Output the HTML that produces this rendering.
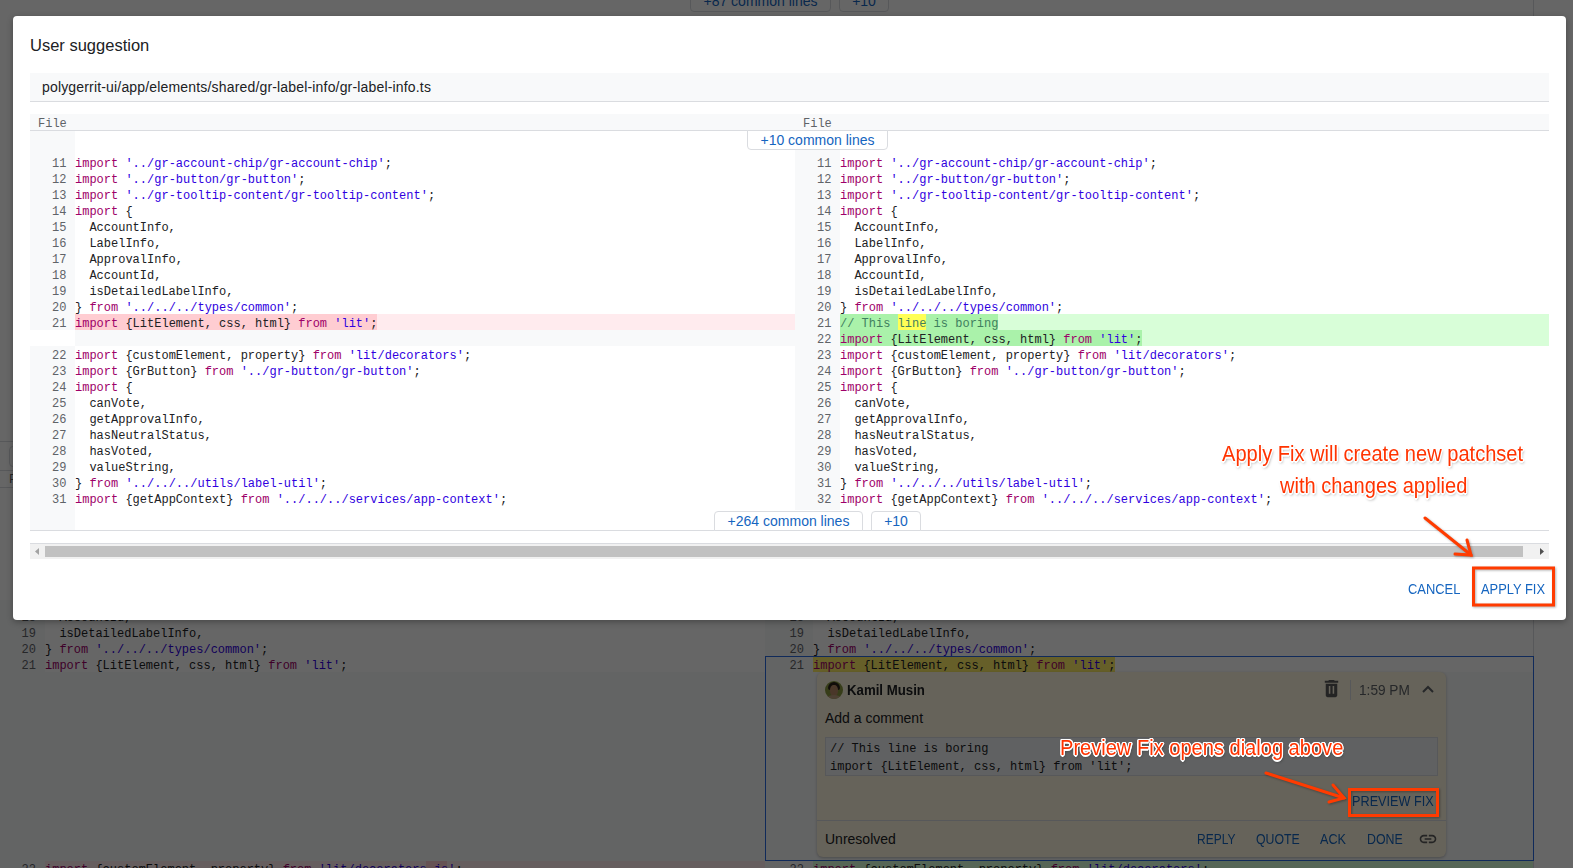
<!DOCTYPE html>
<html><head><meta charset="utf-8">
<style>
*{box-sizing:border-box}
html,body{margin:0;padding:0}
body{width:1573px;height:868px;overflow:hidden;position:relative;background:#fff;font-family:"Liberation Sans",sans-serif;color:#202124}
.a{position:absolute}
.mono{font-family:"Liberation Mono",monospace;font-size:12px}
b{font-weight:normal}
i{font-style:normal}
.k{color:#9e0069}
.s{color:#3000e0}
.c{color:#3f7f5f}
.hl{background:#ffff55;padding-top:3px}
.ln{position:absolute;width:45px;height:16px;background:#f8f9fa;color:#5f6368;text-align:right;padding-right:8.5px;font-family:"Liberation Mono",monospace;font-size:12px;line-height:16px;padding-top:2px;white-space:pre}
.cl{position:absolute;height:16px;font-family:"Liberation Mono",monospace;font-size:12px;line-height:16px;padding-top:2px;white-space:pre;color:#202124}
.blank{position:absolute;height:16px;background:#f8f9fa}
.rml{position:absolute;height:16px;background:#ffebee}
.rmd{position:absolute;height:16px;background:#ffcdd2}
.addl{position:absolute;height:16px;background:#d8fed8}
.addd{position:absolute;height:16px;background:#aaf2aa}
.btn{position:absolute;background:#fff;border:1px solid #dadce0;color:#1565c0;font-size:14px;text-align:center;white-space:nowrap}
.ann{position:absolute;color:#ff3300;font-family:"Liberation Sans",sans-serif;font-size:22px;white-space:nowrap;line-height:24px;transform-origin:0 0;transform:scaleX(0.912);
 text-shadow:1.5px 0 #fff,-1.5px 0 #fff,0 1.5px #fff,0 -1.5px #fff,1px 1px #fff,-1px -1px #fff,1px -1px #fff,-1px 1px #fff,1px 2px 3px rgba(0,0,0,.45)}
.bgln{position:absolute;color:#5f6368;width:40px;text-align:right;font-family:"Liberation Mono",monospace;font-size:12px;line-height:16px;white-space:pre;padding-top:2px}
.bgcl{position:absolute;font-family:"Liberation Mono",monospace;font-size:12px;line-height:16px;white-space:pre;padding-top:2px}
.cbtn{position:absolute;color:#1565c0;font-size:15px;white-space:nowrap;line-height:16px;transform-origin:0 0}
</style></head>
<body>
<!-- background page -->
<div class="a" style="left:0;top:0;width:1573px;height:868px;background:#fff">
  <div class="btn" style="left:690px;top:-9px;width:141px;height:21px;border-radius:0 0 4px 4px;line-height:19px">+87 common lines</div>
  <div class="btn" style="left:839px;top:-9px;width:50px;height:21px;border-radius:0 0 4px 4px;line-height:19px">+10</div>
  <div class="a" style="left:1533px;top:0;width:1px;height:868px;background:#dadce0"></div>
  <div class="a" style="left:0;top:441px;width:20px;height:1px;background:#dadce0"></div>
  <div class="a" style="left:9px;top:446px;width:20px;height:21px;border:1px solid #dadce0;border-radius:4px"></div>
  <div class="a" style="left:0;top:470px;width:20px;height:1px;background:#dadce0"></div>
  <div class="a mono" style="left:9px;top:472px;color:#5f6368;line-height:16px">F</div>
  <div class="a" style="left:0;top:487px;width:20px;height:1px;background:#dadce0"></div>

  <div class="a" style="left:0;top:600px;width:45px;height:268px;background:#f8f9fa"></div><div class="a" style="left:765px;top:600px;width:48px;height:268px;background:#f8f9fa"></div><div class="a" style="left:0;top:672px;width:1533px;height:189px;background:#f8f9fa"></div>
  <div class="bgln" style="left:0px;top:608px;width:36px">18</div><div class="bgcl" style="left:45px;top:608px">  AccountId,</div><div class="bgln" style="left:765px;top:608px;width:39px">18</div><div class="bgcl" style="left:813px;top:608px">  AccountId,</div><div class="bgln" style="left:0px;top:624px;width:36px">19</div><div class="bgcl" style="left:45px;top:624px">  isDetailedLabelInfo,</div><div class="bgln" style="left:765px;top:624px;width:39px">19</div><div class="bgcl" style="left:813px;top:624px">  isDetailedLabelInfo,</div><div class="bgln" style="left:0px;top:640px;width:36px">20</div><div class="bgcl" style="left:45px;top:640px">} <b class="k">from</b> <b class="s">&#x27;../../../types/common&#x27;</b>;</div><div class="bgln" style="left:765px;top:640px;width:39px">20</div><div class="bgcl" style="left:813px;top:640px">} <b class="k">from</b> <b class="s">&#x27;../../../types/common&#x27;</b>;</div><div class="bgln" style="left:0px;top:656px;width:36px">21</div><div class="bgcl" style="left:45px;top:656px"><b class="k">import</b> {LitElement, css, html} <b class="k">from</b> <b class="s">&#x27;lit&#x27;</b>;</div><div class="a" style="left:813px;top:656px;width:302.4px;height:16px;background:#ffee66"></div><div class="bgln" style="left:765px;top:656px;width:39px">21</div><div class="bgcl" style="left:813px;top:656px"><b class="k">import</b> {LitElement, css, html} <b class="k">from</b> <b class="s">&#x27;lit&#x27;</b>;</div><div class="a" style="left:45px;top:861px;width:720px;height:16px;background:#ffebee"></div><div class="a" style="left:426px;top:861px;width:21px;height:16px;background:#ffcdd2"></div><div class="a" style="left:813px;top:861px;width:720px;height:16px;background:#d8fed8"></div><div class="bgln" style="left:0px;top:860px;width:36px">22</div><div class="bgcl" style="left:45px;top:860px"><b class="k">import</b> {customElement, property} <b class="k">from</b> <b class="s">&#x27;lit/decorators.js&#x27;</b>;</div><div class="bgln" style="left:765px;top:860px;width:39px">22</div><div class="bgcl" style="left:813px;top:860px"><b class="k">import</b> {customElement, property} <b class="k">from</b> <b class="s">&#x27;lit/decorators&#x27;</b>;</div>
  <div class="a" style="left:765px;top:656px;width:769px;height:205px;border:1px solid #2a6ae0"></div>
  <div class="a" style="left:817px;top:672px;width:629px;height:185px;border-radius:6px;background:#fef7e0;box-shadow:0 1px 3px rgba(0,0,0,.25)"></div>
  <div class="a" style="left:825px;top:681px;width:18px;height:18px;border-radius:50%;overflow:hidden;background:#8a9a40">
<div class="a" style="left:3px;top:1px;width:12px;height:8px;border-radius:6px 6px 2px 2px;background:#2a2018"></div>
<div class="a" style="left:5px;top:4px;width:8px;height:11px;border-radius:45%;background:#b88a68"></div>
<div class="a" style="left:2px;top:14px;width:14px;height:6px;border-radius:50% 50% 0 0;background:#c0a080"></div></div>
  <div class="a" style="left:846.5px;top:682px;font-size:14px;line-height:16px;font-weight:bold;color:#202124;transform-origin:0 0;transform:scaleX(0.945)">Kamil Musin</div>
  <svg class="a" style="left:1319.5px;top:677px" width="23" height="23" viewBox="0 0 24 24"><path fill="#5a5a5a" d="M6 19c0 1.1.9 2 2 2h8c1.1 0 2-.9 2-2V7H6v12zM19 4h-3.5l-1-1h-5l-1 1H5v2h14V4z"/><path d="M10 9.5v8M14 9.5v8" stroke="#fef7e0" stroke-width="1.6"/></svg>
  <div class="a" style="left:1350px;top:680px;width:1px;height:20px;background:#dadce0"></div>
  <div class="a" style="left:1359px;top:682px;font-size:14px;line-height:16px;color:#5f6368;transform-origin:0 0;transform:scaleX(0.975)">1:59 PM</div>
  <svg class="a" style="left:1420px;top:682px" width="16" height="14"><path d="M3 10 L8 5 L13 10" fill="none" stroke="#5f6368" stroke-width="2"/></svg>
  <div class="a" style="left:825px;top:710px;font-size:14px;line-height:16px;color:#202124">Add a comment</div>
  <div class="a" style="left:825px;top:737px;width:613px;height:39px;background:#f1f3f4;border:1px solid #dadce0"></div>
  <div class="a mono" style="left:830px;top:740px;line-height:18px;white-space:pre;color:#202124">// This line is boring
import {LitElement, css, html} from 'lit';</div>
  <div class="cbtn" style="left:1352px;top:793px;transform:scaleX(0.846)">PREVIEW FIX</div>
  <div class="a" style="left:817px;top:820px;width:629px;height:1px;background:#dadce0"></div>
  <div class="a" style="left:825px;top:831px;font-size:14px;line-height:16px;color:#202124">Unresolved</div>
  <div class="cbtn" style="left:1197px;top:831px;transform:scaleX(0.80)">REPLY</div>
  <div class="cbtn" style="left:1256px;top:831px;transform:scaleX(0.82)">QUOTE</div>
  <div class="cbtn" style="left:1320px;top:831px;transform:scaleX(0.84)">ACK</div>
  <div class="cbtn" style="left:1366.5px;top:831px;transform:scaleX(0.826)">DONE</div>
  <svg class="a" style="left:1418px;top:829px" width="20" height="20" viewBox="0 0 24 24"><path fill="#5a5a5a" d="M3.9 12c0-1.71 1.39-3.1 3.1-3.1h4V7H7c-2.76 0-5 2.24-5 5s2.24 5 5 5h4v-1.9H7c-1.71 0-3.1-1.39-3.1-3.1zM8 13h8v-2H8v2zm9-6h-4v1.9h4c1.71 0 3.1 1.39 3.1 3.1s-1.39 3.1-3.1 3.1h-4V17h4c2.76 0 5-2.24 5-5s-2.24-5-5-5z"/></svg>

</div>
<!-- overlay -->
<div class="a" style="left:0;top:0;width:1573px;height:868px;background:rgba(0,0,0,.6)"></div>

<!-- dialog -->
<div class="a" style="left:13px;top:16px;width:1553px;height:604px;background:#fff;border-radius:4px;box-shadow:0 2px 6px rgba(0,0,0,.3)"></div>
<div class="a" style="left:30px;top:35px;font-size:16.5px;line-height:20px;color:#202124">User suggestion</div>
<div class="a" style="left:30px;top:73px;width:1519px;height:29px;background:#f8f9fa;border-bottom:1px solid #dadce0"></div>
<div class="a" style="left:42px;top:78px;font-size:14px;line-height:18px;color:#202124;letter-spacing:0.17px">polygerrit-ui/app/elements/shared/gr-label-info/gr-label-info.ts</div>
<div class="a" style="left:30px;top:114px;width:1519px;height:17px;background:#f8f9fa;border-bottom:1px solid #dadce0"></div>
<div class="a mono" style="left:38px;top:116px;line-height:16px;color:#5f6368">File</div>
<div class="a mono" style="left:803px;top:116px;line-height:16px;color:#5f6368">File</div>
<div class="a" style="left:30px;top:131px;width:45px;height:23px;background:#f8f9fa"></div>
<div class="btn" style="left:747px;top:130px;width:141px;height:20px;border-radius:0 0 4px 4px;line-height:18px">+10 common lines</div>
<div class="ln" style="left:30px;top:154px">11</div><div class="cl" style="left:75px;top:154px"><b class="k">import</b> <b class="s">&#x27;../gr-account-chip/gr-account-chip&#x27;</b>;</div><div class="ln" style="left:30px;top:170px">12</div><div class="cl" style="left:75px;top:170px"><b class="k">import</b> <b class="s">&#x27;../gr-button/gr-button&#x27;</b>;</div><div class="ln" style="left:30px;top:186px">13</div><div class="cl" style="left:75px;top:186px"><b class="k">import</b> <b class="s">&#x27;../gr-tooltip-content/gr-tooltip-content&#x27;</b>;</div><div class="ln" style="left:30px;top:202px">14</div><div class="cl" style="left:75px;top:202px"><b class="k">import</b> {</div><div class="ln" style="left:30px;top:218px">15</div><div class="cl" style="left:75px;top:218px">  AccountInfo,</div><div class="ln" style="left:30px;top:234px">16</div><div class="cl" style="left:75px;top:234px">  LabelInfo,</div><div class="ln" style="left:30px;top:250px">17</div><div class="cl" style="left:75px;top:250px">  ApprovalInfo,</div><div class="ln" style="left:30px;top:266px">18</div><div class="cl" style="left:75px;top:266px">  AccountId,</div><div class="ln" style="left:30px;top:282px">19</div><div class="cl" style="left:75px;top:282px">  isDetailedLabelInfo,</div><div class="ln" style="left:30px;top:298px">20</div><div class="cl" style="left:75px;top:298px">} <b class="k">from</b> <b class="s">&#x27;../../../types/common&#x27;</b>;</div><div class="ln" style="left:30px;top:314px">21</div><div class="rml" style="left:75px;top:314px;width:720px"></div><div class="rmd" style="left:75px;top:314px;width:302.4px"></div><div class="cl" style="left:75px;top:314px"><b class="k">import</b> {LitElement, css, html} <b class="k">from</b> <b class="s">&#x27;lit&#x27;</b>;</div><div class="blank" style="left:75px;top:330px;width:720px"></div><div class="ln" style="left:30px;top:346px">22</div><div class="cl" style="left:75px;top:346px"><b class="k">import</b> {customElement, property} <b class="k">from</b> <b class="s">&#x27;lit/decorators&#x27;</b>;</div><div class="ln" style="left:30px;top:362px">23</div><div class="cl" style="left:75px;top:362px"><b class="k">import</b> {GrButton} <b class="k">from</b> <b class="s">&#x27;../gr-button/gr-button&#x27;</b>;</div><div class="ln" style="left:30px;top:378px">24</div><div class="cl" style="left:75px;top:378px"><b class="k">import</b> {</div><div class="ln" style="left:30px;top:394px">25</div><div class="cl" style="left:75px;top:394px">  canVote,</div><div class="ln" style="left:30px;top:410px">26</div><div class="cl" style="left:75px;top:410px">  getApprovalInfo,</div><div class="ln" style="left:30px;top:426px">27</div><div class="cl" style="left:75px;top:426px">  hasNeutralStatus,</div><div class="ln" style="left:30px;top:442px">28</div><div class="cl" style="left:75px;top:442px">  hasVoted,</div><div class="ln" style="left:30px;top:458px">29</div><div class="cl" style="left:75px;top:458px">  valueString,</div><div class="ln" style="left:30px;top:474px">30</div><div class="cl" style="left:75px;top:474px">} <b class="k">from</b> <b class="s">&#x27;../../../utils/label-util&#x27;</b>;</div><div class="ln" style="left:30px;top:490px">31</div><div class="cl" style="left:75px;top:490px"><b class="k">import</b> {getAppContext} <b class="k">from</b> <b class="s">&#x27;../../../services/app-context&#x27;</b>;</div>
<div class="ln" style="left:795px;top:154px">11</div><div class="cl" style="left:840px;top:154px"><b class="k">import</b> <b class="s">&#x27;../gr-account-chip/gr-account-chip&#x27;</b>;</div><div class="ln" style="left:795px;top:170px">12</div><div class="cl" style="left:840px;top:170px"><b class="k">import</b> <b class="s">&#x27;../gr-button/gr-button&#x27;</b>;</div><div class="ln" style="left:795px;top:186px">13</div><div class="cl" style="left:840px;top:186px"><b class="k">import</b> <b class="s">&#x27;../gr-tooltip-content/gr-tooltip-content&#x27;</b>;</div><div class="ln" style="left:795px;top:202px">14</div><div class="cl" style="left:840px;top:202px"><b class="k">import</b> {</div><div class="ln" style="left:795px;top:218px">15</div><div class="cl" style="left:840px;top:218px">  AccountInfo,</div><div class="ln" style="left:795px;top:234px">16</div><div class="cl" style="left:840px;top:234px">  LabelInfo,</div><div class="ln" style="left:795px;top:250px">17</div><div class="cl" style="left:840px;top:250px">  ApprovalInfo,</div><div class="ln" style="left:795px;top:266px">18</div><div class="cl" style="left:840px;top:266px">  AccountId,</div><div class="ln" style="left:795px;top:282px">19</div><div class="cl" style="left:840px;top:282px">  isDetailedLabelInfo,</div><div class="ln" style="left:795px;top:298px">20</div><div class="cl" style="left:840px;top:298px">} <b class="k">from</b> <b class="s">&#x27;../../../types/common&#x27;</b>;</div><div class="ln" style="left:795px;top:314px">21</div><div class="addl" style="left:840px;top:314px;width:709px"></div><div class="addd" style="left:840px;top:314px;width:158.4px"></div><div class="cl" style="left:840px;top:314px"><b class="c">// This <i class="hl">line</i> is boring</b></div><div class="ln" style="left:795px;top:330px">22</div><div class="addl" style="left:840px;top:330px;width:709px"></div><div class="addd" style="left:840px;top:330px;width:302.4px"></div><div class="cl" style="left:840px;top:330px"><b class="k">import</b> {LitElement, css, html} <b class="k">from</b> <b class="s">&#x27;lit&#x27;</b>;</div><div class="ln" style="left:795px;top:346px">23</div><div class="cl" style="left:840px;top:346px"><b class="k">import</b> {customElement, property} <b class="k">from</b> <b class="s">&#x27;lit/decorators&#x27;</b>;</div><div class="ln" style="left:795px;top:362px">24</div><div class="cl" style="left:840px;top:362px"><b class="k">import</b> {GrButton} <b class="k">from</b> <b class="s">&#x27;../gr-button/gr-button&#x27;</b>;</div><div class="ln" style="left:795px;top:378px">25</div><div class="cl" style="left:840px;top:378px"><b class="k">import</b> {</div><div class="ln" style="left:795px;top:394px">26</div><div class="cl" style="left:840px;top:394px">  canVote,</div><div class="ln" style="left:795px;top:410px">27</div><div class="cl" style="left:840px;top:410px">  getApprovalInfo,</div><div class="ln" style="left:795px;top:426px">28</div><div class="cl" style="left:840px;top:426px">  hasNeutralStatus,</div><div class="ln" style="left:795px;top:442px">29</div><div class="cl" style="left:840px;top:442px">  hasVoted,</div><div class="ln" style="left:795px;top:458px">30</div><div class="cl" style="left:840px;top:458px">  valueString,</div><div class="ln" style="left:795px;top:474px">31</div><div class="cl" style="left:840px;top:474px">} <b class="k">from</b> <b class="s">&#x27;../../../utils/label-util&#x27;</b>;</div><div class="ln" style="left:795px;top:490px">32</div><div class="cl" style="left:840px;top:490px"><b class="k">import</b> {getAppContext} <b class="k">from</b> <b class="s">&#x27;../../../services/app-context&#x27;</b>;</div>
<div class="a" style="left:30px;top:506px;width:45px;height:24px;background:#f8f9fa"></div>
<div class="a" style="left:795px;top:506px;width:45px;height:4px;background:#f8f9fa"></div><div class="a" style="left:795px;top:150px;width:45px;height:4px;background:#f8f9fa"></div>
<div class="a" style="left:30px;top:530px;width:1519px;height:1px;background:#dadce0"></div>
<div class="btn" style="left:714px;top:511px;width:149px;height:20px;border-radius:4px 4px 0 0;line-height:18px">+264 common lines</div>
<div class="btn" style="left:871px;top:511px;width:50px;height:20px;border-radius:4px 4px 0 0;line-height:18px">+10</div>
<!-- scrollbar -->
<div class="a" style="left:30px;top:543px;width:1519px;height:1px;background:#dadce0"></div>
<div class="a" style="left:30px;top:544px;width:1519px;height:15px;background:#f1f1f1"></div>
<div class="a" style="left:45px;top:546px;width:1478px;height:11px;background:#c1c1c1"></div>
<svg class="a" style="left:30px;top:544px" width="15" height="15"><path d="M9 4 L5 7.5 L9 11 Z" fill="#a3a3a3"/></svg>
<svg class="a" style="left:1534px;top:544px" width="15" height="15"><path d="M6 4 L10 7.5 L6 11 Z" fill="#505050"/></svg>

<div class="cbtn" style="left:1407.5px;top:581px;transform:scaleX(0.86)">CANCEL</div>
<div class="cbtn" style="left:1480.5px;top:581px;transform:scaleX(0.859)">APPLY FIX</div>

<!-- annotations -->
<div class="ann" style="left:1222px;top:442px">Apply Fix will create new patchset</div>
<div class="ann" style="left:1280px;top:474px">with changes applied</div>
<div class="ann" style="left:1060px;top:736px">Preview Fix opens dialog above</div>
<svg class="a" style="left:0;top:0;filter:drop-shadow(1px 1px 1px rgba(0,0,0,.3))" width="1573" height="868">
  <g fill="none" stroke="#ff3b00" stroke-width="3" stroke-linecap="round" stroke-linejoin="miter">
    <rect x="1473.5" y="568" width="80" height="37"/>
    <rect x="1349.5" y="789.5" width="88" height="26"/>
    <path d="M1425 518 L1471 555"/>
    <path d="M1467 540 L1471 555 L1455 554"/>
    <path d="M1266 773 L1344 798"/>
    <path d="M1333 785 L1344 798 L1329 802"/>
  </g>
</svg>
</body></html>
